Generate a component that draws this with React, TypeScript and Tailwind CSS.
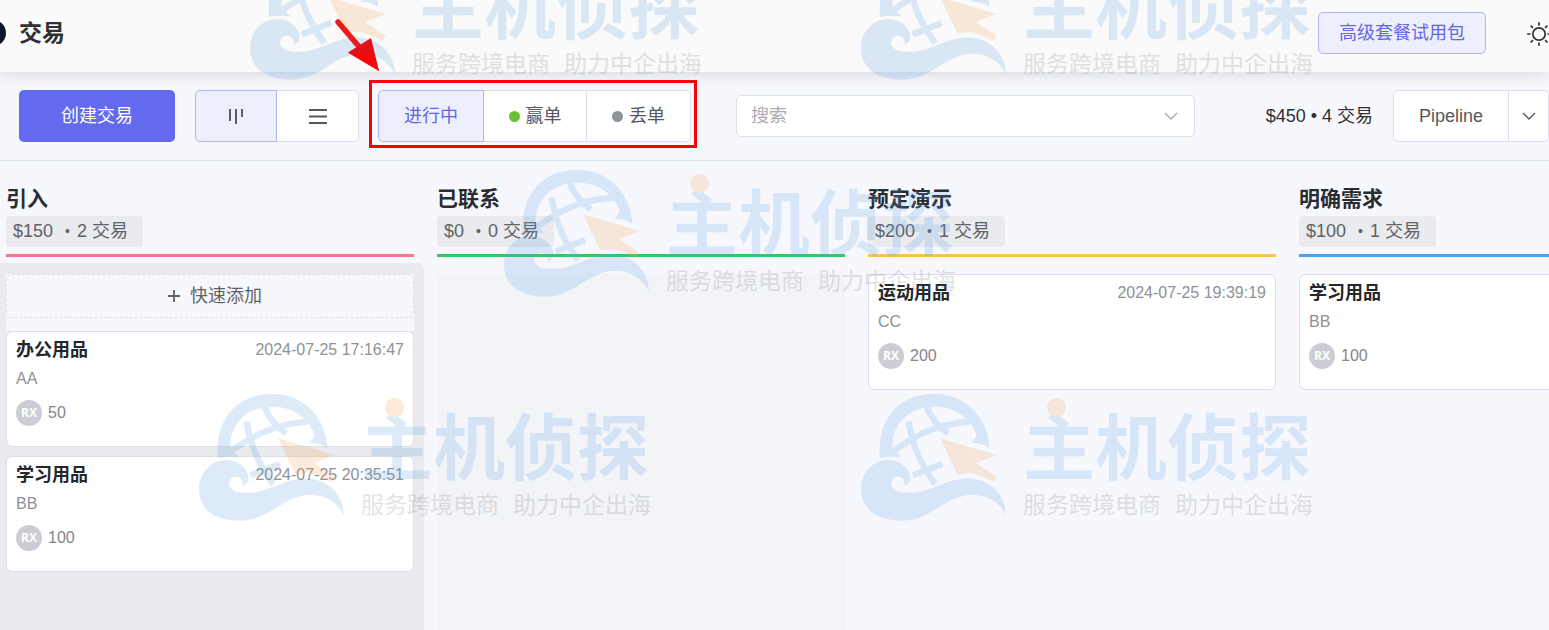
import React from "react";

type Deal = { title: string; time?: string; contact: string; amount: string };

type Stage = {
  name: string;
  total: string;
  count: number;
  line: string;
  body: string;
  quickAdd?: boolean;
  deals: Deal[];
};

const stages: Stage[] = [
  {
    name: "引入",
    total: "$150",
    count: 2,
    line: "border-[#fb7790]",
    body: "bg-[#e9ebee]",
    quickAdd: true,
    deals: [
      { title: "办公用品", time: "2024-07-25 17:16:47", contact: "AA", amount: "50" },
      { title: "学习用品", time: "2024-07-25 20:35:51", contact: "BB", amount: "100" },
    ],
  },
  { name: "已联系", total: "$0", count: 0, line: "border-[#31c968]", body: "", deals: [] },
  {
    name: "预定演示",
    total: "$200",
    count: 1,
    line: "border-[#fec34d]",
    body: "",
    deals: [{ title: "运动用品", time: "2024-07-25 19:39:19", contact: "CC", amount: "200" }],
  },
  {
    name: "明确需求",
    total: "$100",
    count: 1,
    line: "border-[#46a2f7]",
    body: "",
    deals: [{ title: "学习用品", contact: "BB", amount: "100" }],
  },
];

function SunIcon() {
  return (
    <svg viewBox="0 0 24 24" className="size-6 shrink-0" fill="none" stroke="currentColor" strokeWidth="1.7" strokeLinecap="round">
      <circle cx="12" cy="12" r="6.2" />
      <path d="M12 .9v2M12 21.1v2M.9 12h2M21.1 12h2M4.2 4.2l1.2 1.2M18.6 18.6l1.2 1.2M4.2 19.8l1.2-1.2M18.6 5.4l1.2-1.2" />
    </svg>
  );
}

function ChevronIcon({ className }: { className: string }) {
  return (
    <svg viewBox="0 0 14 8" className={className} fill="none" stroke="currentColor" strokeWidth="1.4">
      <path d="M1 1l6 6 6-6" />
    </svg>
  );
}

function DealCard({ deal }: { deal: Deal }) {
  return (
    <article className="h-[116px] rounded-md border border-[#dcdfe6] bg-white px-[9px] pt-1">
      <div className="flex h-7 items-center justify-between whitespace-nowrap">
        <h3 className="text-[18px] font-bold text-[#24272b]">{deal.title}</h3>
        {deal.time && <time className="text-[16px] text-[#8f9196]">{deal.time}</time>}
      </div>
      <p className="flex h-[30px] items-center text-[16px] text-[#8f9196]">{deal.contact}</p>
      <div className="mt-1.5 flex items-center gap-1.5 text-[16px] text-[#84868b]">
        <span className="flex size-[26px] items-center justify-center rounded-full bg-[#cccdd4] font-['Open_Sans',sans-serif] text-[12px] font-bold text-white">
          RX
        </span>
        {deal.amount}
      </div>
    </article>
  );
}

function StageColumn({ stage }: { stage: Stage }) {
  return (
    <section className="flex w-[431px] shrink-0 flex-col">
      <header className={"mr-[17px] ml-1.5 border-b-3 pb-[7px] " + stage.line}>
        <h2 className="h-[31px] text-[21px] leading-[31px] font-bold text-[#292c30]">{stage.name}</h2>
        <div className="mt-0.5 inline-flex h-[31px] items-center rounded-sm bg-[#e9ebee] pr-[15px] pl-[7px] align-top text-[18px] text-[#606266]">
          {stage.total}
          <span className="mr-[7px] ml-3 text-[14px]">•</span>
          {stage.count} 交易
        </div>
      </header>
      <div className={"mt-1.5 mr-[7px] flex flex-1 flex-col rounded-tr-md pt-[11px] pr-2.5 pl-1.5 " + stage.body}>
        {stage.quickAdd && (
          <div className="bg-[#f7f8fd] pb-[13px]">
            <button className="flex h-11 w-full items-center justify-center gap-2.5 rounded-md border border-dashed border-[#dcdfe6] pl-2.5 text-[18px] text-[#606266]">
              <svg viewBox="0 0 12 12" className="size-3" fill="none" stroke="currentColor" strokeWidth="1.8">
                <path d="M6 0v12M0 6h12" />
              </svg>
              快速添加
            </button>
          </div>
        )}
        {stage.deals.length === 0 && <div className="flex-1 bg-[#f3f4f8]" />}
        <div className="flex flex-col gap-[9px]">
          {stage.deals.map((deal) => (
            <DealCard key={deal.title} deal={deal} />
          ))}
        </div>
      </div>
    </section>
  );
}

function Watermark({ place }: { place: string }) {
  return (
    <div aria-hidden="true" className={"pointer-events-none absolute z-20 flex gap-[17px] opacity-20 " + place}>
      <svg viewBox="31 42 435 381" className="h-[127px] w-[145px] shrink-0">
        <path d="M88 234C78 117 145 42 250 42C345 42 412 112 416 204C401 193 383 187 362 188C369 181 375 174 378 164C358 110 310 80 250 80C174 80 120 135 126 206L152 232C132 229 110 229 88 234Z" fill="#5a9fe6" />
        <path
          d="M116 222C192 166 254 133 358 125M174 124C184 198 216 262 254 312M228 80C240 112 262 140 292 160M186 286L274 252"
          fill="none"
          stroke="#5a9fe6"
          strokeWidth="19"
        />
        <path
          d="M31 330C30 274 72 237 116 240C157 243 184 275 179 300C177 308 169 314 164 317C159 310 165 302 153 293C140 286 121 295 121 311C122 332 150 341 191 338C249 333 294 291 361 296C418 300 467 345 465 406C452 372 414 345 369 344C285 343 245 420 157 422C83 423 33 391 31 330Z"
          fill="#5a9fe6"
        />
        <path d="M268 175L438 225L376 249L438 290L430 305L366 278L320 283Z" fill="#f5a04c" />
      </svg>
      <div className="relative pt-3.5">
        <span className="absolute top-1 left-6 size-[19px] rounded-full bg-[#f5a04c]" />
        <div className="h-[82px] text-[72px] leading-[82px] font-bold whitespace-nowrap text-[#5a9fe6]">主机侦探</div>
        <div className="flex gap-3.5 text-[23px] leading-[30px] whitespace-nowrap text-[#777]">
          <span>服务跨境电商</span>
          <span>助力中企出海</span>
        </div>
      </div>
    </div>
  );
}

const segment = "flex h-[52px] items-center justify-center border-[#dcdfe6] bg-white text-[18px] text-[#55585c]";
const activeSegment = "flex h-[52px] items-center justify-center rounded-l-[5px] border border-[#b1b3f8] bg-[#eeeffc] text-[18px]";

export default function App() {
  return (
    <div className="relative flex h-screen flex-col overflow-hidden bg-[#f7f8fd] font-['Liberation_Sans','Noto_Sans_CJK_SC',sans-serif]">
      <header className="relative z-10 flex h-[72px] shrink-0 items-center bg-[#fafafa] pb-1.5 shadow-[0_2px_14px_rgba(40,45,70,0.15)]">
        <span className="-ml-5 size-[26px] rounded-full bg-[#0b1626]" />
        <h1 className="ml-[13px] text-[23px] font-bold text-[#303133]">交易</h1>
        <button className="ml-auto h-[42px] rounded-[5px] border border-[#b1b3f8] bg-[#eeeffc] px-5 text-[18px] text-[#6366e8]">
          高级套餐试用包
        </button>
        <button aria-label="切换主题" className="-mr-0.5 ml-[41px] pt-0.5 text-[#303133]">
          <SunIcon />
        </button>
      </header>

      <div className="flex h-[89px] shrink-0 items-center border-b border-[#dcdfe6] pl-[19px] whitespace-nowrap">
        <button className="h-[52px] w-[156px] shrink-0 rounded-[5px] bg-[#636aee] text-[18px] text-white">创建交易</button>

        <div className="ml-5 flex shrink-0">
          <button aria-label="看板" className={activeSegment + " w-[82px] text-[#5a5c66]"}>
            <svg viewBox="0 0 16 18" className="h-[18px] w-4" fill="none" stroke="currentColor" strokeWidth="2">
              <path d="M2 2v12M8 2v15M14 2v8" />
            </svg>
          </button>
          <button aria-label="列表" className={segment + " w-[82px] rounded-r-[5px] border-y border-r"}>
            <svg viewBox="0 0 18 16" className="h-4 w-[18px]" fill="none" stroke="currentColor" strokeWidth="1.8">
              <path d="M0 2h18M0 8.500h18M0 15h18" />
            </svg>
          </button>
        </div>

        <div className="relative ml-[19px] flex shrink-0">
          <button className={activeSegment + " w-[106px] text-[#6366e8]"}>进行中</button>
          <button className={segment + " w-[103px] gap-1.5 border-y border-r"}>
            <span className="size-[11px] rounded-full bg-[#67c23a]" />
            赢单
          </button>
          <button className={segment + " w-[104px] gap-1.5 rounded-r-[5px] border-y border-r"}>
            <span className="size-[11px] rounded-full bg-[#909399]" />
            丢单
          </button>
          <span className="pointer-events-none absolute -top-2.5 -right-1.5 -bottom-1.5 -left-[9px] z-30 border-3 border-[#f50505]" />
          <svg viewBox="0 0 48 56" className="pointer-events-none absolute -top-[73px] -left-[45px] z-30 h-14 w-12">
            <path d="M5 5L28 32" stroke="#f01818" strokeWidth="5.5" strokeLinecap="round" />
            <path d="M15 35.5L38 21L46 54Z" fill="#e30f1a" />
            <path d="M15 35.5L41 39L46 54Z" fill="#fb0505" />
          </svg>
        </div>

        <div className="relative ml-[45px] h-[42px] min-w-0 flex-1">
          <input
            aria-label="搜索"
            placeholder="搜索"
            className="h-full w-full rounded-[5px] border border-[#dcdfe6] bg-white pr-10 pl-3.5 text-[18px] outline-none placeholder:text-[#a8abb2]"
          />
          <ChevronIcon className="absolute top-[17px] right-[17px] h-2 w-3.5 text-[#a8abb2]" />
        </div>

        <div className="ml-[71px] shrink-0 text-[18px] text-[#303133]">$450 • 4 交易</div>
        <div className="ml-5 flex shrink-0">
          <button className={segment + " w-[116px] rounded-l-[5px] border"}>Pipeline</button>
          <button aria-label="选择 Pipeline" className={segment + " w-10 rounded-r-[5px] border-y border-r"}>
            <ChevronIcon className="h-2 w-3.5" />
          </button>
        </div>
      </div>

      <main className="flex min-h-0 flex-1 overflow-hidden pt-[22px]">
        {stages.map((stage) => (
          <StageColumn key={stage.name} stage={stage} />
        ))}
      </main>

      <Watermark place="-top-[47px] left-[250px]" />
      <Watermark place="-top-[47px] left-[861px]" />
      <Watermark place="top-[170px] left-[504px]" />
      <Watermark place="top-[394px] left-[199px]" />
      <Watermark place="top-[394px] left-[861px]" />
    </div>
  );
}
